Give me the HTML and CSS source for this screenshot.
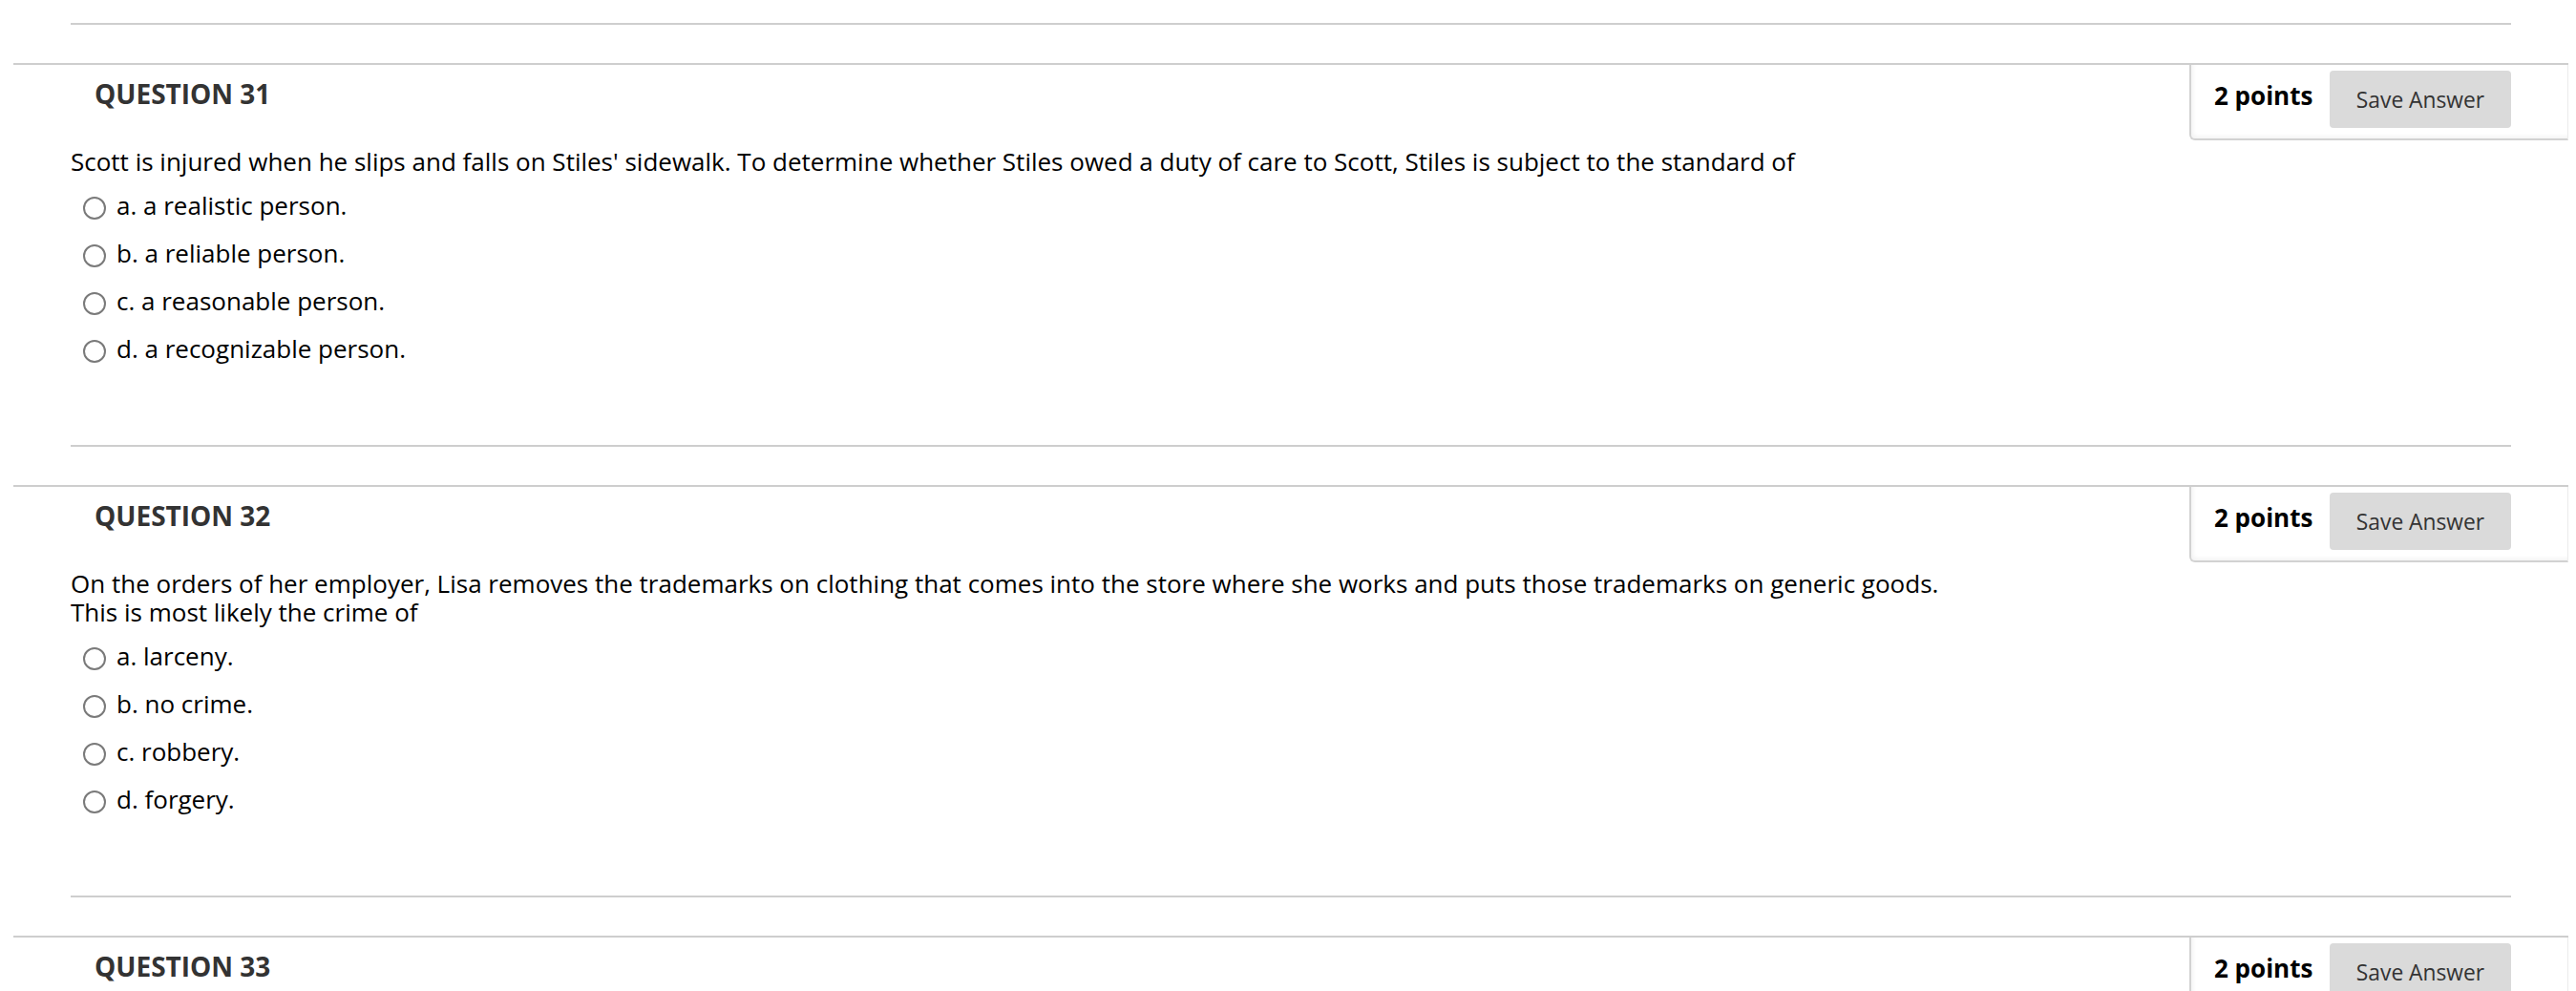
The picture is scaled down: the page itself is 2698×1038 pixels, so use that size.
FILE: index.html
```html
<!DOCTYPE html>
<html lang="en">
<head>
<meta charset="utf-8">
<title>Questions</title>
<link rel="stylesheet" href="styles.css">
</head>
<body>
<div class="page">
  <div class="prev-tail"></div>
  <ul class="questions">
    <li class="question">
      <div class="q-head">
        <h3 class="q-title">QUESTION 31</h3>
        <div class="points-box">
          <span class="points">2 points</span>
          <button class="save-btn" type="button">Save Answer</button>
        </div>
      </div>
      <div class="q-body">
        <p class="q-text">Scott is injured when he slips and falls on Stiles' sidewalk. To determine whether Stiles owed a duty of care to Scott, Stiles is subject to the standard of</p>
        <ul class="options">
          <li class="option"><input type="radio" name="q31" class="radio"><span class="opt-label">a. a realistic person.</span></li>
          <li class="option"><input type="radio" name="q31" class="radio"><span class="opt-label">b. a reliable person.</span></li>
          <li class="option"><input type="radio" name="q31" class="radio"><span class="opt-label">c. a reasonable person.</span></li>
          <li class="option"><input type="radio" name="q31" class="radio"><span class="opt-label">d. a recognizable person.</span></li>
        </ul>
      </div>
    </li>
    <li class="question">
      <div class="q-head">
        <h3 class="q-title">QUESTION 32</h3>
        <div class="points-box">
          <span class="points">2 points</span>
          <button class="save-btn" type="button">Save Answer</button>
        </div>
      </div>
      <div class="q-body">
        <p class="q-text"><span class="q-line">On the orders of her employer, Lisa removes the trademarks on clothing that comes into the store where she works and puts those trademarks on generic goods.</span><span class="q-line">This is most likely the crime of</span></p>
        <ul class="options">
          <li class="option"><input type="radio" name="q32" class="radio"><span class="opt-label">a. larceny.</span></li>
          <li class="option"><input type="radio" name="q32" class="radio"><span class="opt-label">b. no crime.</span></li>
          <li class="option"><input type="radio" name="q32" class="radio"><span class="opt-label">c. robbery.</span></li>
          <li class="option"><input type="radio" name="q32" class="radio"><span class="opt-label">d. forgery.</span></li>
        </ul>
      </div>
    </li>
    <li class="question">
      <div class="q-head">
        <h3 class="q-title">QUESTION 33</h3>
        <div class="points-box">
          <span class="points">2 points</span>
          <button class="save-btn" type="button">Save Answer</button>
        </div>
      </div>
    </li>
  </ul>
</div>
</body>
</html>
```

FILE: styles.css
```css
* {
  box-sizing: border-box;
}

html,
body {
  margin: 0;
  padding: 0;
  background: #ffffff;
}

body {
  font-family: "Open Sans", "Noto Sans", sans-serif;
  color: #000000;
}

.page {
  padding: 0 8px 0 14px;
  overflow: hidden;
}

.prev-tail {
  height: 26px;
  margin: 0 60px 40px;
  border-bottom: 2px solid #cecece;
}

.questions {
  list-style: none;
  margin: 0;
  padding: 0;
}

.question {
  border-top: 2px solid #cecece;
  margin-bottom: 40px;
}

.q-head {
  display: flex;
  justify-content: space-between;
  align-items: flex-start;
}

.q-title {
  margin: 11px 0 0 85px;
  font-size: 28px;
  line-height: 38px;
  font-weight: 700;
  color: #333333;
}

.points-box {
  width: 397px;
  height: 79px;
  display: flex;
  justify-content: space-between;
  align-items: flex-start;
  padding: 6px 59px 0 24px;
  border-left: 2px solid #d2d2d2;
  border-bottom: 2px solid #d2d2d2;
  border-right: 1px solid #ececec;
  border-bottom-left-radius: 6px;
  box-shadow: inset 2px -2px 4px rgba(0, 0, 0, 0.05);
  background: #ffffff;
}

.points {
  margin-top: 8px;
  font-size: 26px;
  line-height: 36px;
  font-weight: 700;
  color: #000000;
}

.save-btn {
  width: 190px;
  height: 60px;
  padding: 0;
  border: none;
  border-radius: 4px;
  background: #dadada;
  font-family: "Open Sans", "Noto Sans", sans-serif;
  font-size: 22.8px;
  color: #333333;
}

.q-body {
  margin: 0 60px;
  padding-bottom: 76px;
  border-bottom: 2px solid #cecece;
}

.q-text {
  margin: 7px 0 0 0;
  font-size: 26px;
  line-height: 30px;
}

.q-line {
  display: block;
}

.options {
  list-style: none;
  margin: 6px 0 0 0;
  padding: 0 0 0 13px;
}

.option {
  display: flex;
  align-items: flex-start;
  height: 50px;
  font-size: 26px;
  line-height: 50px;
}

.radio {
  appearance: none;
  -webkit-appearance: none;
  flex: none;
  width: 24px;
  height: 24px;
  margin: 16px 11px 0 0;
  border: 2px solid #7a7a7a;
  border-radius: 50%;
  background: #ffffff;
}
```
